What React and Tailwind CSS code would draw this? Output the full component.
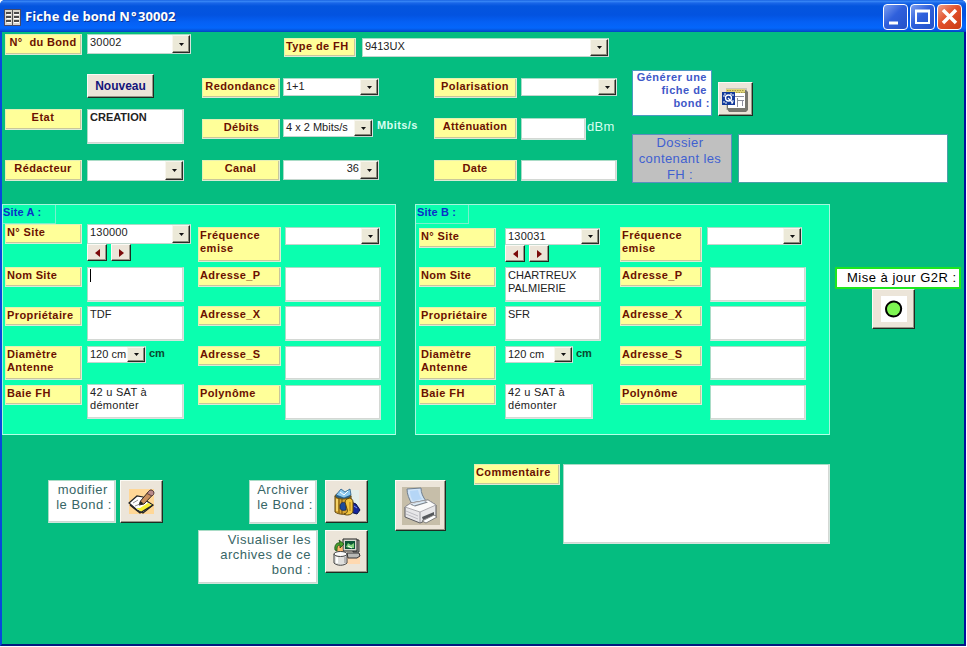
import { clsx } from "clsx";

function Lines({ children }) {
  const rows = Array.isArray(children) ? children : [children];
  return rows.map((row, i) => (
    <span key={i} className="block whitespace-pre">
      {row}
    </span>
  ));
}

function Label({ className, lines }) {
  return (
    <div
      className={clsx(
        "shrink-0 border border-t-[#e4efb4] border-l-[#e4efb4] border-r-[#dcebd6] border-b-[#dcebd6] bg-[#ffff99] pt-px pl-[1px] text-[11px] leading-[13px] font-bold text-[#6b1000] shadow-[inset_-1px_-1px_0_#c9c79a]",
        className,
      )}
    >
      <Lines>{lines}</Lines>
    </div>
  );
}

function Field({ className, lines = "" }) {
  return (
    <div
      className={clsx(
        "shrink-0 border border-t-[#a9dcc6] border-l-[#a9dcc6] border-r-[#d5e6df] border-b-[#d5e6df] bg-white pt-px pl-[2px] text-[11px] leading-[13px] text-[#222] shadow-[inset_-1px_-1px_0_#d4d8d4]",
        className,
      )}
    >
      <Lines>{lines}</Lines>
    </div>
  );
}

function Combo({ className, value = "", right = false, track = "" }) {
  return (
    <div
      className={clsx(
        "flex shrink-0 border border-t-[#a9dcc6] border-l-[#a9dcc6] border-r-[#d5e6df] border-b-[#c4d6ce] bg-white text-[11px] leading-[13px] text-[#222]",
        className,
      )}
    >
      <span className={clsx("min-w-0 grow pt-px whitespace-pre", right ? "pr-px text-right" : "pl-[2px]", track)}>{value}</span>
      <span className="flex w-[18px] shrink-0 items-center justify-center border border-t-[#f8f6ee] border-l-[#f8f6ee] border-r-[#2a2a26] border-b-[#2a2a26] bg-[#ece9d8] shadow-[inset_-1px_-1px_0_#8d8a7c]">
        <svg width="5" height="3" viewBox="0 0 5 3">
          <path d="M0 0h5L2.5 3z" fill="#111" />
        </svg>
      </span>
    </div>
  );
}

function PushButton({ className, children }) {
  return (
    <div
      className={clsx(
        "flex shrink-0 items-center justify-center border border-t-[#fbfaf4] border-l-[#fbfaf4] border-r-[#1e2c22] border-b-[#1e2c22] bg-[#ece5d9] shadow-[inset_-1px_-1px_0_#9a9688]",
        className,
      )}
    >
      {children}
    </div>
  );
}

function Caption({ className, lines }) {
  return (
    <div
      className={clsx(
        "shrink-0 border border-t-[#a9dcc6] border-l-[#a9dcc6] border-r-[#cfe6dc] border-b-[#cfe6dc] bg-white pt-[1px] text-right text-[13px] leading-[15px] tracking-[0.5px] text-[#376666] shadow-[inset_-1px_-1px_0_#cdd8d2]",
        className,
      )}
    >
      <Lines>{lines}</Lines>
    </div>
  );
}

function Stepper() {
  return (
    <div className="flex h-[17px] gap-[4px]">
      <PushButton className="w-5">
        <svg width="5" height="8" viewBox="0 0 5 8"><path d="M5 0v8L0 4z" fill="#7b0a0a" /></svg>
      </PushButton>
      <PushButton className="w-5">
        <svg width="5" height="8" viewBox="0 0 5 8"><path d="M0 0v8l5-4z" fill="#7b0a0a" /></svg>
      </PushButton>
    </div>
  );
}

function FormIcon() {
  return (
    <svg width="17" height="17" viewBox="0 0 17 17" shapeRendering="crispEdges">
      <path d="M0 0h17v17H0z" fill="#d8d5cc" />
      <path d="M0 0h17v1H0zM0 0h1v17H0zM0 16h17v1H0zM16 0h1v17h-1z" fill="#4a4a66" />
      <path d="M2 3h5v2H2zM10 3h5v2h-5zM2 7h5v2H2zM10 7h5v2h-5zM2 11h5v2H2zM10 11h5v2h-5z" fill="#4a4a4a" />
      <path d="M3 5h4v1H3zM10 5h5v1h-5zM3 9h4v1H3zM10 9h5v1h-5zM3 13h4v1H3zM10 13h5v1h-5z" fill="#fff" />
      <path d="M8 1h1v15H8z" fill="#555" />
    </svg>
  );
}

function CaptionButton({ className, children }) {
  return (
    <div className={clsx("flex h-[26px] w-[25px] items-center justify-center rounded-[4px] border border-white", className)}>
      <svg width="23" height="24" viewBox="0 0 23 24" fill="none" stroke="#fff">
        {children}
      </svg>
    </div>
  );
}

function ReportIcon() {
  return (
    <svg width="27" height="27" viewBox="0 0 27 27">
      <path d="M4 2h21v22H4z" fill="#c9c7bd" />
      <path d="M8 4h16l2 2v18l-2 2H7l-2-3V8z" fill="#77766e" />
      <path d="M6 6h17v16H6z" fill="#fff" />
      <path d="M4 3h19v4H4z" fill="#e0d478" />
      <path d="M4 6.500h19M5 4.500h17" stroke="#a39a48" strokeDasharray="1.500 1" />
      <path d="M13 10.500h9M15.500 12v9M16 14.500h6M20.500 14v6" stroke="#8d8f9d" />
      <path d="M0 6h13v13H0z" fill="#133a9b" />
      <path d="M2 11V8h3M8 8h3v3M11 14v3H8M5 17H2v-3" stroke="#fff" fill="none" strokeDasharray="2 1" />
      <circle cx="6.500" cy="12" r="3" fill="#133a9b" stroke="#fff" strokeWidth="1.300" />
      <path d="M6 12l5 5" stroke="#fff" strokeWidth="1.300" />
    </svg>
  );
}

function EditIcon() {
  return (
    <svg width="28" height="27" viewBox="0 0 28 27">
      <path d="M1 1h25v25H1z" fill="#ffd796" />
      <path d="M1 15L9 8l6 1 2 3 8 5-10 8-6-3z" fill="#fff" stroke="#222" strokeWidth="1.200" />
      <path d="M8 20l6 4 10-7-4-2-8 5z" fill="#f5ef36" />
      <path d="M2 17l10 8 13-8" fill="none" stroke="#222" strokeWidth="1.400" />
      <path d="M11 17l1.500-4L21 3c2-2 6 0 4 3.500l-9 9.500z" fill="#c9905e" stroke="#33241a" />
      <path d="M20.500 3.500c2-3 7-.5 5 3l-1.500 1.500-5-2.500z" fill="#b98a8a" stroke="#4a3030" strokeWidth=".8" />
      <path d="M11 17l1.500-4 3 2.500z" fill="#222" />
      <path d="M5 15l5-3M7 18l5-2" stroke="#777" strokeWidth=".8" />
    </svg>
  );
}

function BinIcon() {
  return (
    <svg width="28" height="28" viewBox="0 0 28 28">
      <path d="M10 2h16v24H10z" fill="#e3eeea" />
      <path d="M2 8h16v16c-4 3-12 3-16 0z" fill="#d9a632" stroke="#5d430c" />
      <path d="M6 11v14M9 11v15" stroke="#8a6412" strokeWidth="1.300" />
      <path d="M4 11v12" stroke="#ffe27a" strokeWidth="1.500" />
      <ellipse cx="10" cy="8" rx="8" ry="3" fill="#2f5f7c" stroke="#6d5212" />
      <path d="M3 7l5-6 4 3 5-3 1 6-7 3z" fill="#8cc9ee" stroke="#255a86" strokeWidth=".8" />
      <path d="M7 4l4 3 4-4" stroke="#fff" fill="none" />
      <path d="M7 17c1-3 4-3 6-2v7c-3 1-6 0-6-2z" fill="#1d4b9b" stroke="#0f2250" strokeWidth=".7" />
      <path d="M18 14l5 2 4 6-3 4-7-2z" fill="#15259c" stroke="#0a1244" />
      <path d="M12 14c1-5 8-5 8 0v9c0 4-7 5-9 3 3-1 4-2 3-5z" fill="#f2c63e" stroke="#5d430c" />
      <path d="M17 14v9" stroke="#a8791a" />
      <path d="M21 18l3 2" stroke="#7d9cf0" fill="none" />
    </svg>
  );
}

function RestoreIcon() {
  return (
    <svg width="28" height="28" viewBox="0 0 28 28">
      <path d="M14 15h13v11H12z" fill="#ffd9b0" />
      <path d="M14 15h12l1 3-3 2h-9z" fill="#b9b9b5" stroke="#333" />
      <path d="M20 2h6v12h-6z" fill="#a7a7a0" stroke="#333" />
      <path d="M10 1h14v12H10z" fill="#d9d8cf" stroke="#222" />
      <path d="M12 3h10v8H12z" fill="#0c5535" />
      <path d="M13 9l2-4 3 2 3-2v5h-4z" fill="#7ed07a" />
      <path d="M15 8l4 2" stroke="#fff" />
      <path d="M3 9l6-3 1 8-5 1z" fill="#ffb46a" />
      <path d="M2 12C1 7 4 4 7 5L6 2l5 4-4 4V7c-3 0-3 3-3 6z" fill="#49a02d" stroke="#1c4c12" strokeWidth=".8" />
      <path d="M1 16v9c3 3 10 3 13 0v-9z" fill="#e0e0de" stroke="#444" />
      <ellipse cx="7.500" cy="16" rx="6.500" ry="2.500" fill="#fafafa" stroke="#444" />
      <path d="M4 19v6" stroke="#fff" strokeWidth="2" />
      <path d="M12 19v6" stroke="#aaa" strokeWidth="1.500" />
    </svg>
  );
}

function PrinterIcon() {
  return (
    <svg width="38" height="38" viewBox="0 0 38 38">
      <path d="M0 0h38v38H0z" fill="#c6bea9" />
      <path d="M5 2l14-1c0 5 2 9 5 13l-14 3C7 12 5 7 5 2z" fill="#cfe4f8" stroke="#6e7f90" />
      <path d="M8 4l8-1c1 4 2 7 4 9l-9 2C9 11 8 8 8 4z" fill="#b5d6f6" />
      <path d="M3 20l6-4 17-3 8 5v11L18 36 3 30z" fill="#e7e7e9" stroke="#5c5c60" />
      <path d="M3 20l15 5 16-7-8-5-17 3z" fill="#fafafa" stroke="#9b9ba0" strokeWidth=".8" />
      <path d="M8 17.500l15-3.500 3 1.500-13 4z" fill="#7d848c" />
      <path d="M10 17l12-3 2 1-12 3.500z" fill="#dcebf8" />
      <path d="M18 25v10" stroke="#9b9ba0" />
      <path d="M20 30l12-5v3l-11 5z" fill="#55585c" />
      <path d="M20 34l12-6 3 2-11 6z" fill="#fff" stroke="#666" strokeWidth=".8" />
      <path d="M4 24l12 5M4 27l12 5" stroke="#bcbcc2" />
    </svg>
  );
}

function TitleBar() {
  return (
    <header className="flex h-8 shrink-0 items-start bg-[linear-gradient(180deg,#0a52d8_0px,#3d8cf8_1px,#1a66e8_3px,#0455de_6px,#0353e0_15px,#0560f4_22px,#0466fb_28px,#0450d4_31px,#0443bd_32px)] pr-[4px] pl-1">
      <span className="mt-[9px]"><FormIcon /></span>
      <h1 className="mt-[7px] ml-[4px] grow font-['Open_Sans','Noto_Sans',sans-serif] text-[13px] leading-[19px] font-bold tracking-[0.08px] whitespace-pre text-white [text-shadow:1px_1px_0_#0b3596]">
        Fiche de bond N<span className="ml-[1px] tracking-[1.5px]">°</span>30002
      </h1>
      <div className="mt-1 flex gap-[2px]">
        <CaptionButton className="bg-[linear-gradient(135deg,#7d9ff0,#2f60dc_45%,#2452c8)]">
          <path d="M5 18h9" strokeWidth="3" />
        </CaptionButton>
        <CaptionButton className="bg-[linear-gradient(135deg,#7d9ff0,#2f60dc_45%,#2452c8)]">
          <path d="M4 6h15" strokeWidth="3" />
          <path d="M5 6v12h13V6" strokeWidth="2" />
        </CaptionButton>
        <CaptionButton className="bg-[linear-gradient(135deg,#f0a088,#e2512c_45%,#c93a14)]">
          <path d="M5 5l13 13M18 5L5 18" strokeWidth="3.500" />
        </CaptionButton>
      </div>
    </header>
  );
}

function Header() {
  return (
    <section className="flex h-[172px] shrink-0 items-start pl-[3px]">
      <div className="flex w-[77px] flex-col pt-[2px] text-center">
        <Label className="h-[21px] pr-[2px] tracking-[0.35px]" lines="N°  du Bond" />
        <Label className="mt-[54px] h-[21px] pr-[2px] tracking-[0.5px]" lines="Etat" />
        <Label className="mt-[30px] h-[21px] pr-[2px] tracking-[0.4px]" lines="Rédacteur" />
      </div>
      <div className="ml-[5px] flex w-[104px] flex-col items-start pt-[2px]">
        <Combo className="h-5 w-[104px]" value="30002" track="tracking-[0.2px]" />
        <PushButton className="mt-5 h-6 w-[67px] text-[12px] font-bold text-[#14147a]">Nouveau</PushButton>
        <Field className="mt-[11px] h-[35px] w-[97px] font-bold" lines="CREATION" />
        <Combo className="mt-4 h-[21px] w-[97px]" />
      </div>
      <div className="ml-[11px] flex w-[415px] flex-col pt-[6px]">
        <div className="ml-[82px] flex items-start">
          <Label className="h-[19px] w-[72px] tracking-[0.4px]" lines="Type de FH" />
          <Combo className="ml-[6px] h-[19px] w-[247px]" value="9413UX" />
        </div>
        <div className="mt-[21px] flex h-5 items-start">
          <Label className="h-5 w-[78px] pr-[2px] text-center tracking-[0.45px]" lines="Redondance" />
          <Combo className="ml-[3px] h-[18px] w-24" value="1+1" />
          <Label className="ml-[55px] h-5 w-[83px] pr-[2px] text-center tracking-[0.4px]" lines="Polarisation" />
          <Combo className="ml-[4px] h-[18px] w-24" />
        </div>
        <div className="mt-5 flex h-[22px] items-start">
          <Label className="mt-px h-5 w-[78px] text-center tracking-[0.3px]" lines="Débits" />
          <Combo className="mt-px ml-[3px] h-[18px] w-[90px]" value="4 x 2 Mbits/s" />
          <span className="ml-[4px] w-[57px] text-[11px] leading-[14px] font-bold tracking-[0.4px] text-[#d5fff0]">Mbits/s</span>
          <Label className="h-[21px] w-[83px] pr-[2px] text-center tracking-[0.3px]" lines="Atténuation" />
          <Field className="ml-[4px] h-[22px] w-[65px]" />
          <span className="ml-px text-[13px] leading-[17px] tracking-[0.3px] text-[#d5fff0]">dBm</span>
        </div>
        <div className="mt-5 flex items-start">
          <Label className="h-[21px] w-[78px] pr-[2px] text-center tracking-[0.3px]" lines="Canal" />
          <Combo className="ml-[3px] h-5 w-24" value="36" right />
          <Label className="ml-[55px] h-[21px] w-[83px] pr-[2px] text-center tracking-[0.3px]" lines="Date" />
          <Field className="ml-[4px] h-[21px] w-24" />
        </div>
      </div>
      <div className="ml-[15px] flex flex-col pt-[38px]">
        <div className="flex items-start">
          <div className="h-[46px] w-20 border border-[#4a9ac0] bg-white pr-[4px] text-right text-[11px] leading-[13px] font-bold tracking-[0.5px] text-[#4058c8]">
            <Lines>{["Générer une", "fiche de"]}</Lines>
            <span className="-mr-[3px] block">bond :</span>
          </div>
          <PushButton className="mt-3 ml-[6px] h-[34px] w-[35px]"><ReportIcon /></PushButton>
        </div>
        <div className="mt-[18px] flex">
          <div className="h-[49px] w-[100px] border border-[#5b8fc0] bg-[#c0c0c0] pr-[4px] text-center text-[13px] leading-[16px] tracking-[0.4px] text-[#4060d0]">
            <Lines>{["Dossier", "contenant les", "FH :"]}</Lines>
          </div>
          <div className="ml-[6px] h-[49px] w-[210px] border border-[#4aa0a8] bg-white" />
        </div>
      </div>
    </section>
  );
}

const FREE_ROWS = [
  ["Adresse_P", "h-[35px] mb-[4px]"],
  ["Adresse_X", "h-[35px] mb-[5px]"],
  ["Adresse_S", "h-[34px] mb-[5px]"],
  ["Polynôme", "h-[35px]"],
];

function RightHalf({ labelClass, comboClass, fieldClass }) {
  return (
    <div className="flex flex-col pt-[22px]">
      <div className="flex h-[40px] items-start">
        <Label className={clsx("h-[35px] tracking-[0.5px]", labelClass)} lines={["Fréquence", "emise"]} />
        <Combo className={clsx("h-[18px]", comboClass)} />
      </div>
      {FREE_ROWS.map(([name, size]) => (
        <div key={name} className={clsx("flex items-start", size)}>
          <Label className={clsx("h-5 tracking-[0.4px]", labelClass)} lines={name} />
          <Field className={clsx("h-full w-24", fieldClass)} />
        </div>
      ))}
    </div>
  );
}

function Site({ className, leftClass, title, titleClass, labelsClass, numberLabelClass, number, nameField, owner, gap, boxWidth, diameterWidth, rackWidth, right }) {
  return (
    <section className={clsx("flex h-[231px] shrink-0 border border-[#a6f5dc] border-b-[#b4ffe6] bg-[#0affaf]", className)}>
      <div className={clsx("shrink-0", leftClass)}>
        <div className={clsx("h-[19px] w-[53px] border-r border-b border-[#7af0cc] text-[11px] leading-[14px] font-bold tracking-[0.15px] text-[#0a32c8]", titleClass)}>
          {title}
        </div>
        <div className="flex">
          <div className={clsx("flex flex-col", labelsClass)}>
            <div className={clsx("h-[43px]", numberLabelClass)}>
              <Label className="h-5 tracking-[0.4px]" lines="N° Site" />
            </div>
            <Label className="h-5 tracking-[0.3px]" lines="Nom Site" />
            <Label className="mt-[20px] h-[19px] tracking-[0.4px]" lines="Propriétaire" />
            <Label className="mt-[20px] h-[34px] tracking-[0.4px]" lines={["Diamètre", "Antenne"]} />
            <Label className="mt-[5px] h-5 tracking-[0.4px]" lines="Baie FH" />
          </div>
          <div className={clsx("flex flex-col items-start", gap)}>
            <div className="h-[43px]">
              {number}
              <Stepper />
            </div>
            {nameField}
            <Field className={clsx("mt-[4px] h-[35px]", boxWidth)} lines={owner} />
            <div className="mt-[5px] flex h-[34px] items-start">
              <Combo className={clsx("h-[17px]", diameterWidth)} value="120 cm" />
              <span className="ml-[3px] text-[11px] leading-[15px] font-bold text-[#084b30]">cm</span>
            </div>
            <Field className={clsx("mt-[4px] h-[35px] tracking-[0.3px]", rackWidth)} lines={["42 u SAT à", "démonter"]} />
          </div>
        </div>
      </div>
      {right}
    </section>
  );
}

function Sites() {
  return (
    <div className="flex shrink-0 items-start">
      <Site
        className="w-[394px]"
        leftClass="w-[195px]"
        title="Site A :"
        labelsClass="ml-[2px] w-[77px]"
        gap="ml-[5px]"
        boxWidth="w-[97px]"
        diameterWidth="w-[59px]"
        rackWidth="w-[97px]"
        owner="TDF"
        number={<Combo className="h-5 w-[104px]" value="130000" track="tracking-[0.2px]" />}
        nameField={
          <div className="flex h-[35px] w-[97px] border border-t-[#a9dcc6] border-l-[#a9dcc6] border-r-[#d5e6df] border-b-[#d5e6df] bg-white pt-px pl-[2px] shadow-[inset_-1px_-1px_0_#d4d8d4]">
            <span className="h-[13px] w-px bg-black" />
          </div>
        }
        right={<RightHalf labelClass="w-[83px]" comboClass="ml-[4px] w-[95px]" fieldClass="ml-[4px]" />}
      />
      <Site
        className="ml-[19px] w-[415px]"
        leftClass="w-[204px]"
        title="Site B :"
        titleClass="pl-px"
        labelsClass="ml-[3px] w-[77px]"
        numberLabelClass="pt-[4px]"
        gap="ml-[9px]"
        boxWidth="w-24"
        diameterWidth="w-[68px]"
        rackWidth="w-[88px]"
        owner="SFR"
        number={<Combo className="mt-[4px] h-[17px] w-[95px]" value="130031" track="tracking-[0.2px]" />}
        nameField={<Field className="h-[35px] w-24" lines={["CHARTREUX", "PALMIERIE"]} />}
        right={<RightHalf labelClass="w-[82px]" comboClass="ml-[5px] w-[95px]" fieldClass="ml-[8px]" />}
      />
      <div className="mt-[63px] ml-[5px] flex flex-col">
        <div className="h-[22px] w-[126px] border-2 border-[#1ee61e] bg-white pl-[10px] text-[13px] leading-[18px] tracking-[0.5px] whitespace-pre text-black">
          Mise à jour G2R :
        </div>
        <PushButton className="ml-[37px] h-10 w-[43px]">
          <span className="flex size-[26px] items-center justify-center bg-white">
            <svg width="19" height="18" viewBox="0 0 19 18">
              <path d="M6 2.500C9 1 13 1.500 15.500 4c2 2.500 2 6 .5 9-2 3-6 4-9 3-3-.5-5-4-5-7 0-3 1.500-5 4-6.500z" fill="#7df552" stroke="#000" strokeWidth="2" strokeLinejoin="round" />
            </svg>
          </span>
        </PushButton>
      </div>
    </div>
  );
}

function Footer() {
  return (
    <section className="flex grow items-start pt-[29px] pl-[46px]">
      <div className="mt-4 flex gap-[4px]">
        <Caption className="h-[43px] w-[68px] pr-[3px]" lines={["modifier ", "le Bond :"]} />
        <PushButton className="size-[43px]"><EditIcon /></PushButton>
      </div>
      <div className="mt-4 ml-[35px] flex flex-col">
        <div className="flex h-[50px] items-start justify-end gap-2">
          <Caption className="h-[44px] w-[68px] pr-[3px]" lines={["Archiver ", "le Bond :"]} />
          <PushButton className="size-[43px]"><BinIcon /></PushButton>
        </div>
        <div className="flex items-start gap-[7px]">
          <Caption className="h-[54px] w-[120px] pr-[6px]" lines={["Visualiser les", "archives de ce", "bond :"]} />
          <PushButton className="size-[43px]"><RestoreIcon /></PushButton>
        </div>
      </div>
      <PushButton className="mt-4 ml-[27px] size-[51px]"><PrinterIcon /></PushButton>
      <Label className="ml-[28px] h-[21px] w-[86px] tracking-[0.4px]" lines="Commentaire" />
      <Field className="ml-[3px] h-20 w-[267px]" />
    </section>
  );
}

export default function App() {
  return (
    <div className="h-[647px] w-[967px] overflow-hidden bg-white font-['Liberation_Sans',Arial,sans-serif]">
      <div className="flex h-[646px] w-[966px] flex-col overflow-hidden rounded-t-[5px] bg-[#0450d4]">
        <TitleBar />
        <main className="flex grow flex-col border-r-2 border-b-2 border-l-2 border-r-[#02109c] border-b-[#021a80] border-l-[#0848dc] bg-[#05bd80]">
          <Header />
          <Sites />
          <Footer />
        </main>
      </div>
    </div>
  );
}
